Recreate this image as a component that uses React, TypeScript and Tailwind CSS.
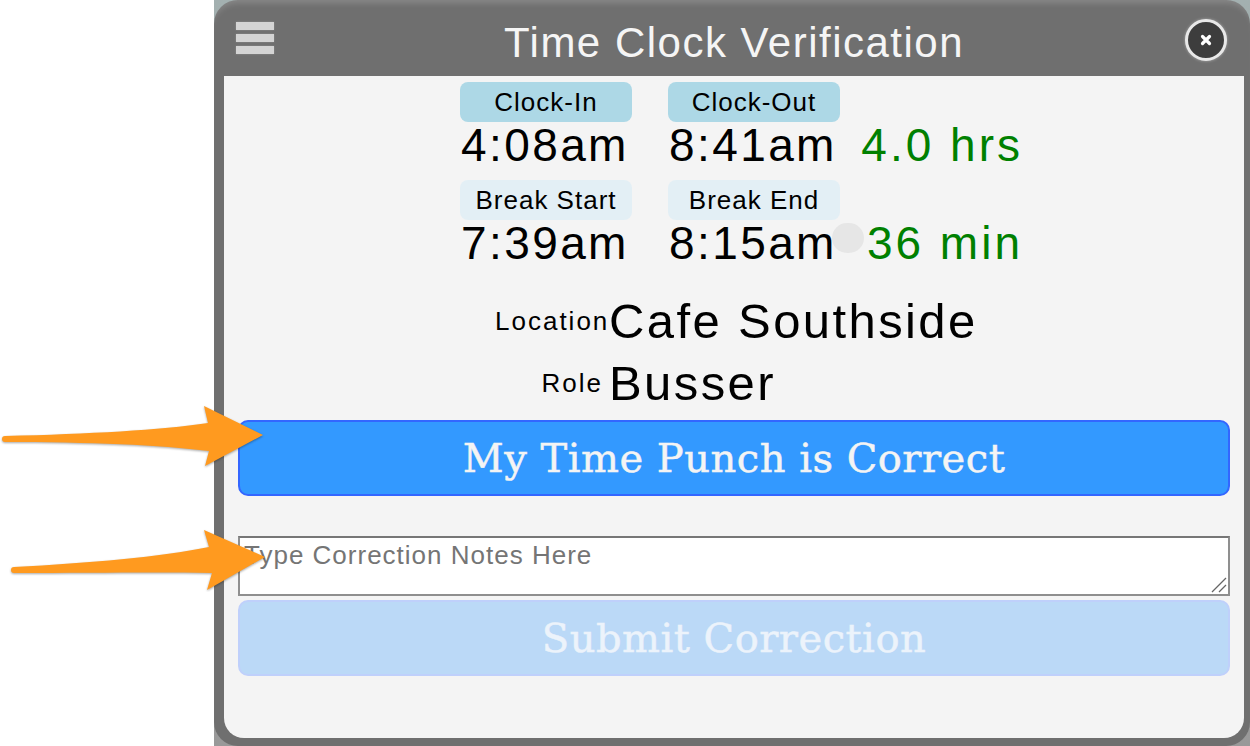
import { Fragment } from "react";

const sans = "font-['Liberation_Sans',Arial,sans-serif]";
const slab = "font-['DejaVu_Serif',serif] [-webkit-text-stroke:0.5px]";

const arrowShadow = { filter: "drop-shadow(0 1px 1px rgba(0,0,0,0.35))" };

const rows = [
  {
    left: "Clock-In",
    right: "Clock-Out",
    start: "4:08am",
    end: "8:41am",
    total: "4.0 hrs",
    pill: "bg-[#add8e6]",
  },
  {
    left: "Break Start",
    right: "Break End",
    start: "7:39am",
    end: "8:15am",
    total: "36 min",
    pill: "bg-[#e3eff5]",
  },
];

export default function App() {
  return (
    <div className={`relative h-[746px] w-[1250px] overflow-hidden bg-white ${sans}`}>
      <div className="ml-[214px] h-full w-[1036px] bg-gradient-to-b from-[#a3b0b0] to-[#999999]">
        <div className="flex h-full flex-col rounded-[24px] bg-[#6f6f6f] pb-2 pl-2.5 pr-1.5 shadow-[inset_0_7px_6px_-4px_rgba(255,255,255,0.18)]">
          {/* Header */}
          <div className="relative flex h-[76px] shrink-0 items-center justify-center">
            <div className="absolute left-[12px] top-[22px] flex flex-col gap-1">
              <div className="h-2 w-[38px] bg-[#d4d4d4] shadow-[0_0_2px_#999]" />
              <div className="h-2 w-[38px] bg-[#d4d4d4] shadow-[0_0_2px_#999]" />
              <div className="h-2 w-[38px] bg-[#d4d4d4] shadow-[0_0_2px_#999]" />
            </div>
            <h1 className="pt-[9px] text-[42px] leading-none tracking-[1.5px] text-[#f5f5f5]">
              Time Clock Verification
            </h1>
            <button className="absolute right-[17px] top-[19px] flex h-[42px] w-[42px] items-center justify-center rounded-full border-[3px] border-[#e8e8e8] bg-[#3d3d3d] shadow-[0_0_3px_#aaa]">
              <svg width="16" height="16" viewBox="0 0 16 16">
                <path d="M4.5 4.5 L11.5 11.5 M11.5 4.5 L4.5 11.5" stroke="#fff" strokeWidth="3.2" strokeLinecap="round" />
              </svg>
            </button>
          </div>

          {/* Body */}
          <div className="flex flex-1 flex-col rounded-b-[20px] bg-[#f4f4f4] px-3.5 pt-1.5">
            <div className="ml-[222px] grid grid-cols-[172px_172px_147px] gap-x-9">
              {rows.map((row, i) => (
                <Fragment key={row.left}>
                  <div className={i === 1 ? "mt-[9px]" : ""}>
                    <div className={`flex h-10 items-center justify-center rounded-lg text-[26px] tracking-[1px] ${row.pill}`}>
                      {row.left}
                    </div>
                    <div className="h-[49px] pl-px text-[46px] leading-[47px] tracking-[2.4px]">{row.start}</div>
                  </div>
                  <div className={i === 1 ? "mt-[9px]" : ""}>
                    <div className={`flex h-10 items-center justify-center rounded-lg text-[26px] tracking-[1px] ${row.pill}`}>
                      {row.right}
                    </div>
                    <div className="relative h-[49px] pl-px text-[46px] leading-[47px] tracking-[2.4px]">
                      {row.end}
                      {i === 1 && <div className="absolute left-[164px] top-[3px] h-[30px] w-8 rounded-full bg-[#e6e6e6]" />}
                    </div>
                  </div>
                  <div className={`flex items-end justify-end text-[46px] leading-[47px] tracking-[3px] text-[#008000] ${i === 1 ? "mt-[9px]" : ""}`}>
                    <span className="h-[49px] whitespace-nowrap">{row.total}</span>
                  </div>
                </Fragment>
              ))}
            </div>

            <div className="mt-[21px] flex items-center pl-[257px]">
              <span className="w-[114px] pr-[7px] text-right text-[26px] tracking-[2px]">Location</span>
              <span className="text-[49px] leading-[62px] tracking-[2.4px]">Cafe Southside</span>
            </div>
            <div className="flex items-center pl-[257px]">
              <span className="w-[114px] pr-[6px] text-right text-[26px] tracking-[2px]">Role</span>
              <span className="text-[49px] leading-[62px] tracking-[2.4px]">Busser</span>
            </div>

            <button className={`mt-1.5 h-[76px] w-full rounded-[10px] border-2 border-[#3366ff] bg-[#3399ff] text-[40px] tracking-[0.5px] text-[#f4f4f4] ${slab}`}>
              My Time Punch is Correct
            </button>

            <div className="relative mt-10">
              <textarea
                placeholder="Type Correction Notes Here"
                className="block h-[60px] w-full resize-none border-2 border-b-[#8f8f8f] border-l-[#8f8f8f] border-r-[#8f8f8f] border-t-[#767676] bg-white px-1 pt-[3px] text-[26px] leading-7 tracking-[1px] placeholder:text-[#757575]"
              />
              <svg className="absolute bottom-[3px] right-[3px] h-4 w-4" viewBox="0 0 16 16" fill="none">
                <path d="M1 15 L15 1 M8 15 L15 8" stroke="#666" strokeWidth="1.3" />
              </svg>
            </div>

            <button className={`mt-1 h-[76px] w-full rounded-[10px] border-2 border-[#bfd0fb] bg-[#bbd9f7] text-[40px] tracking-[0.5px] text-[#ecf3fb] ${slab}`}>
              Submit Correction
            </button>
          </div>
        </div>
      </div>

      {/* Annotation arrows */}
      <svg className="absolute left-0 top-[400px] h-[70px] w-[270px]" viewBox="0 0 270 70" fill="#ff9a1f">
        <path
          d="M2 39 Q2 36 5 36 C90 34 160 30 208 23 L204 6 L263 35 L205 66 L209 51 C160 45 90 42 5 42 Q2 42 2 39 Z"
          style={arrowShadow}
        />
      </svg>
      <svg className="absolute left-0 top-[520px] h-[72px] w-[270px]" viewBox="0 0 270 72" fill="#ff9a1f">
        <path
          d="M11 50 Q11 47 14 47 C90 43 160 37 209 27 L204 10 L265 37 L207 70 L212 53 C160 52 90 53 14 53 Q11 53 11 50 Z"
          style={arrowShadow}
        />
      </svg>
    </div>
  );
}
